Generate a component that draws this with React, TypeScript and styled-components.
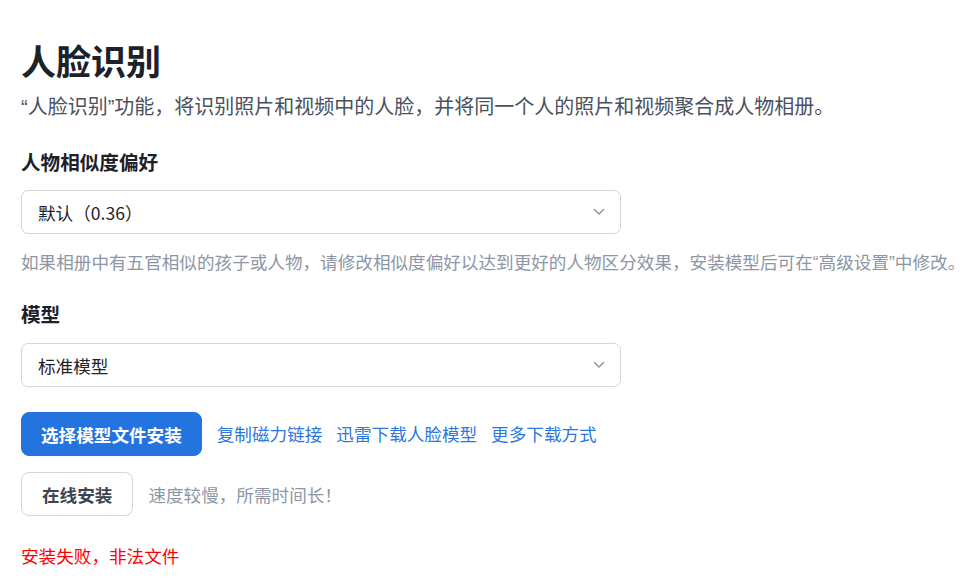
import React from 'react';
import styled, { createGlobalStyle } from 'styled-components';

const GlobalStyle = createGlobalStyle`
  body {
    margin: 0;
    background: #ffffff;
    font-family: 'Noto Sans CJK SC', 'Noto Sans', sans-serif;
    color: #1f2329;
  }
`;

const Page = styled.main`
  padding: 39px 21px 0;
`;

const Title = styled.h1`
  margin: 0;
  font-size: 35px;
  line-height: 42px;
  font-weight: 700;
  color: #1d2129;
`;

const Description = styled.p`
  margin: 11px 0 0;
  font-size: 20px;
  line-height: 28px;
  color: #4a5160;
  white-space: nowrap;
`;

// narrow latin quotes, as in the reference
const Quote = styled.span`
  font-family: 'Liberation Sans', sans-serif;
  line-height: 1;
`;

const Label = styled.h2<{ $gap: number }>`
  margin: ${p => p.$gap}px 0 0;
  font-size: 19.6px;
  line-height: 28px;
  font-weight: 700;
  color: #1d2129;
`;

const Select = styled.div<{ $gap: number }>`
  margin-top: ${p => p.$gap}px;
  width: 600px;
  height: 44px;
  box-sizing: border-box;
  border: 1px solid #cfd6e0;
  border-radius: 7px;
  padding: 0 15px 0 16px;
  display: flex;
  align-items: center;
  justify-content: space-between;
  font-size: 17.6px;
  color: #1f2329;
`;

const Chevron = () => (
  <svg width="12" height="8" viewBox="0 0 12 8" fill="none">
    <path d="M1.5 1.5 6 6l4.5-4.5" stroke="#8a94a4" strokeWidth="1.5" strokeLinecap="round" strokeLinejoin="round" />
  </svg>
);

const Hint = styled.p`
  margin: 15px 0 0;
  font-size: 17.6px;
  line-height: 26px;
  color: #8d96a5;
  white-space: nowrap;
`;

const Row = styled.div<{ $gap: number }>`
  margin-top: ${p => p.$gap}px;
  display: flex;
  align-items: center;
  gap: 15px;
`;

const Links = styled.div`
  display: flex;
  gap: 14px;
`;

const Button = styled.button<{ $primary?: boolean }>`
  height: 44px;
  box-sizing: border-box;
  padding: 0 ${p => (p.$primary ? 19 : 20)}px;
  border-radius: 8px;
  border: 1px solid ${p => (p.$primary ? '#2474e0' : '#cfd6e0')};
  background: ${p => (p.$primary ? '#2474e0' : '#ffffff')};
  color: ${p => (p.$primary ? '#ffffff' : '#3d4450')};
  font-family: inherit;
  font-size: 17.6px;
  font-weight: 700;
  cursor: pointer;
`;

const Link = styled.a`
  font-size: 17.6px;
  line-height: 26px;
  color: #2b78e0;
  text-decoration: none;
  cursor: pointer;
`;

const Note = styled.span`
  font-size: 17.6px;
  color: #8d96a5;
`;

const ErrorText = styled.p`
  margin: 27px 0 0;
  font-size: 17.6px;
  line-height: 26px;
  color: #ff0000;
`;

export default function App() {
  return (
    <>
      <GlobalStyle />
      <Page>
        <Title>人脸识别</Title>
        <Description>
          <Quote>“</Quote>人脸识别<Quote>”</Quote>功能，将识别照片和视频中的人脸，并将同一个人的照片和视频聚合成人物相册。
        </Description>

        <Label $gap={28}>人物相似度偏好</Label>
        <Select $gap={14}>
          <span>默认（0.36）</span>
          <Chevron />
        </Select>
        <Hint>
          如果相册中有五官相似的孩子或人物，请修改相似度偏好以达到更好的人物区分效果，安装模型后可在<Quote>“</Quote>高级设置<Quote>”</Quote>中修改。
        </Hint>

        <Label $gap={25}>模型</Label>
        <Select $gap={15}>
          <span>标准模型</span>
          <Chevron />
        </Select>

        <Row $gap={25}>
          <Button $primary>选择模型文件安装</Button>
          <Links>
            <Link>复制磁力链接</Link>
            <Link>迅雷下载人脸模型</Link>
            <Link>更多下载方式</Link>
          </Links>
        </Row>
        <Row $gap={16}>
          <Button>在线安装</Button>
          <Note>速度较慢，所需时间长！</Note>
        </Row>

        <ErrorText>安装失败，非法文件</ErrorText>
      </Page>
    </>
  );
}
